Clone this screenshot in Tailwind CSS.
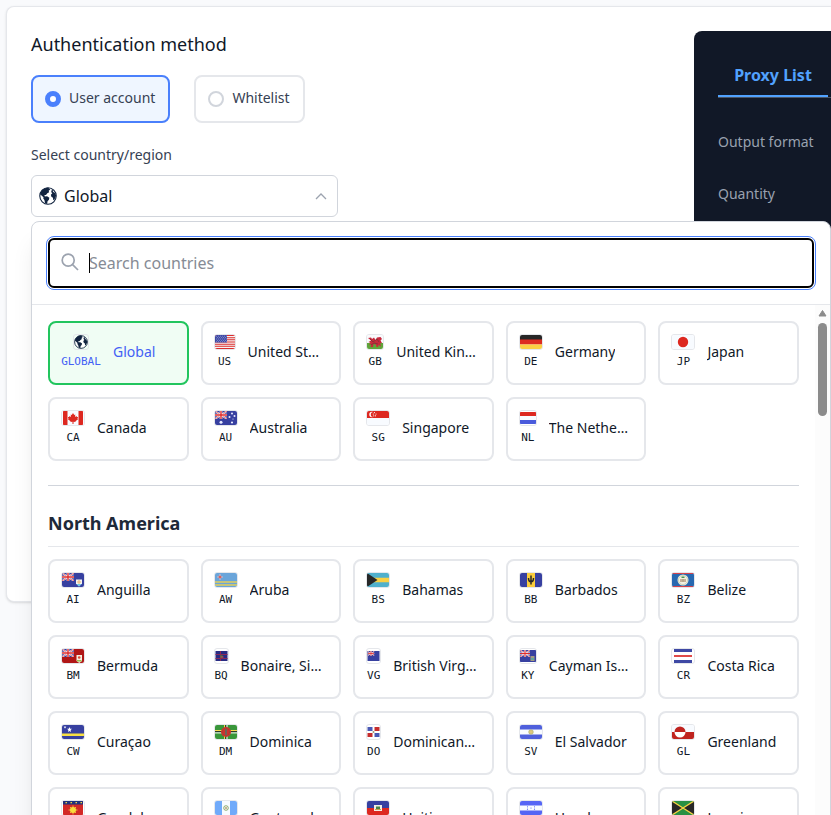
<!DOCTYPE html>
<html lang="en">
<head>
    <meta charset="UTF-8">
    <meta name="viewport" content="width=device-width, initial-scale=1.0">
    <title>Proxy Setup</title>
    <script src="https://cdn.jsdelivr.net/npm/@tailwindcss/browser@4"></script>
</head>
<body class="h-screen overflow-hidden bg-[#f9fafc] pt-1.5 pl-1.5 font-['Noto_Sans','Open_Sans',sans-serif] text-gray-900">
    <!-- Shared shapes -->
    <svg class="hidden">
        <symbol id="globe" viewBox="0 0 16 16">
            <circle cx="8" cy="8" r="7.3" fill="#fff" stroke="#11233f" stroke-width="1"/>
            <path fill="#11233f" d="M8.2.6 10 2.2 8.6 3.4 9 4.6 7.4 5.6 6.2 7 4.8 7.2 5.2 8.4 7.2 8.2 9.2 9.6 8.8 11.4 7.6 12.6 7.2 15 5.4 14.4 4.8 11.6 3.8 10.2 4 9 1 6.4C1.6 3 4.6.6 8.2.6ZM11.4 2.4 13 3.4 12.2 4.2 14 5.2 15.2 7.6 14.6 9.4 13.4 11.8 12.6 11.4 12.4 9.6 11 8.6 10.6 6.8 11.8 5.6 10.8 4.4Z"/>
        </symbol>
        <symbol id="jack" viewBox="0 0 12 8">
            <path fill="#3740a0" d="M0 0h12v8H0z"/>
            <path stroke="#fff" stroke-width="1.6" d="m0 0 12 8M12 0 0 8"/>
            <path stroke="#dd2c2c" stroke-width=".7" d="m0 0 12 8M12 0 0 8"/>
            <path stroke="#fff" stroke-width="2.6" d="M6 0v8M0 4h12"/>
            <path stroke="#dd2c2c" stroke-width="1.4" d="M6 0v8M0 4h12"/>
        </symbol>
    </svg>

    <main class="flex min-h-[596px] items-start rounded-l-lg border-y border-l border-gray-200 bg-white pt-6 pl-6 shadow-sm">
        <div class="min-w-0 flex-1">
            <h2 class="pb-0.5 text-lg leading-[26px]">Authentication method</h2>

            <div class="mt-4 flex gap-6">
                <label class="flex h-12 items-center gap-2 rounded-lg border-2 border-[#4a80fc] bg-blue-50 pr-[13px] pl-3 text-sm text-gray-700">
                    <input type="radio" name="auth" checked class="size-4 appearance-none rounded-full border-[5px] border-[#4a80fc] bg-white">
                    <span class="pb-0.5">User account</span>
                </label>
                <label class="flex h-12 items-center gap-2 rounded-lg border-2 border-gray-200 pr-[13px] pl-3 text-sm text-gray-700">
                    <input type="radio" name="auth" class="size-4 appearance-none rounded-full border-2 border-gray-300 bg-white">
                    <span class="pb-0.5">Whitelist</span>
                </label>
            </div>

            <label for="country" class="mt-5 mb-2 block text-sm leading-6 text-gray-700">Select country/region</label>
            <div class="relative w-[307px]">
                <select id="country" class="block h-[42px] w-full appearance-none rounded-md border border-gray-300 bg-white pl-8 text-base">
                    <option>Global</option>
                </select>
                <svg class="pointer-events-none absolute top-3 left-2 size-[18px]"><use href="#globe"/></svg>
                <svg class="pointer-events-none absolute top-4 right-[11px] size-3" viewBox="0 0 12 12" fill="none" stroke="#9ca3af" stroke-width="1.3"><path d="m1 8 5-5 5 5"/></svg>

                <!-- Country menu -->
                <div class="absolute top-full left-0 z-10 mt-1 w-[calc(100vw-31px)] rounded-t-lg border border-gray-300 bg-white shadow-xl">
                    <div class="border-b border-gray-200 p-3.5">
                        <div class="relative rounded-lg border border-[#4a80fc] p-px">
                            <svg class="pointer-events-none absolute top-4 left-3.5 size-[18px]" viewBox="0 0 18 18" fill="none" stroke="#9ca3af" stroke-width="1.7"><circle cx="7.2" cy="7.2" r="6"/><path d="m11.6 11.6 5.4 5.4"/></svg>
                            <span class="pointer-events-none absolute top-4 left-[42px] h-5 w-px bg-black"></span>
                            <input type="text" aria-label="Search countries" placeholder="Search countries" class="block h-[50px] w-full rounded-md border-2 border-black pl-[39px] text-base outline-none placeholder:text-[#868b95]">
                        </div>
                    </div>
                    <div class="flex">
                        <div class="min-w-0 flex-1 p-4">
                            <div id="popular" class="grid grid-cols-5 gap-3"></div>
                            <hr class="mt-6 border-gray-300">
                            <h3 class="mt-6 mb-3 border-b border-gray-200 pb-2.5 text-lg leading-[26px] font-bold text-gray-800">North America</h3>
                            <div id="northAmerica" class="grid grid-cols-5 gap-3"></div>
                        </div>
                        <!-- Scrollbar -->
                        <div class="flex w-[15px] flex-col items-center bg-[#fcfcfc] pt-1">
                            <svg class="h-2 w-[9px]" viewBox="0 0 9 8"><path fill="#8b8b8b" stroke="#8b8b8b" stroke-linejoin="round" d="M4.5 1.5 8 7H1z"/></svg>
                            <div class="mt-1.5 h-[93px] w-[9px] rounded-full bg-[#8b8b8b]"></div>
                        </div>
                    </div>
                </div>
            </div>
        </div>

        <!-- Output card -->
        <aside class="h-[540px] w-[137px] shrink-0 rounded-l-lg bg-[#111827] pt-6 pl-6">
            <div class="border-b border-gray-600">
                <button class="block h-[42px] w-[110px] border-b-2 border-blue-400 text-base font-bold text-blue-400">Proxy List</button>
            </div>
            <p class="mt-8 text-sm leading-6 whitespace-nowrap text-gray-400">Output format</p>
            <p class="mt-7 text-sm leading-6 text-gray-400">Quantity</p>
        </aside>
    </main>

    <script>
        const full = 'w-6', wide = 'w-[22px]', mid = 'w-[18px]', small = 'w-[15px]';

        // code, name, column width, viewBox, flag drawing
        const popular = [
            ['GLOBAL', 'Global', 'w-10', '0 0 16 16', '<use href="#globe" width="16" height="16"/>'],
            ['US', 'United States', wide, '0 0 20 14', '<path fill="#f4f4f4" d="M0 0h20v14H0z"/><path stroke="#dd2c2c" stroke-width="1.1" d="M0 .5h20M0 2.7h20M0 4.8h20M0 7h20M0 9.2h20M0 11.3h20M0 13.5h20"/><path fill="#3f4aa5" d="M0 0h12v7.6H0z"/><path stroke="#c9cdf0" stroke-width=".7" stroke-dasharray=".7 1.3" d="M1 1.2h11M2 2.6h10M1 4h11M2 5.4h10M1 6.7h11"/>'],
            ['GB', 'United Kingdom', mid, '0 0 16 14', '<path fill="#f8fafc" d="M0 0h16v8H0z"/><path fill="#5fa53a" d="M0 8h16v6H0z"/><path fill="#c8283c" d="m1 3 3-.5L5 4l2-1.500L8.500 5 10 2.500 13.500 2 15 4l-1.500 1.500L15 8l-2 .5 1 3-2.500-1.500-.5 2H9.500L9 9.500 6.500 9 6 12H3.500l1-2.500-2.500.5L3.500 8 1.500 7 4 5.500z"/><path stroke="#5b3a30" stroke-width=".6" fill="none" d="m3 4 3 3 4-3 2 3M4 10l3-2 4 1"/>'],
            ['DE', 'Germany', full, '0 0 22 14', '<path fill="#272727" d="M0 0h22v5H0z"/><path fill="#dd2c20" d="M0 4.6h22v5H0z"/><path fill="#fbd043" d="M0 9.4h22V14H0z"/>'],
            ['JP', 'Japan', full, '0 0 22 14', '<path fill="#f8fbff" d="M0 0h22v14H0z"/><circle cx="11" cy="7" r="5.2" fill="#dd2820"/>'],
            ['CA', 'Canada', full, '0 0 22 14', '<path fill="#f8fbff" d="M0 0h22v14H0z"/><path fill="#dd2820" d="M1 0h4.500v14H1zM16.500 0H21v14h-4.500z"/><path fill="#dd2820" d="m11 2 1.200 2 1.100-.5-.3 2.600 1.500-1.200.4 1h1.200l-.6 1.800.6.6-2.700 2 .2.800-2.100-.3V13h-1v-2.200l-2.100.3.2-.8-2.700-2 .6-.6-.6-1.800h1.200l.4-1L9 6.100l-.3-2.600 1.100.5z"/>'],
            ['AU', 'Australia', full, '0 0 22 14', '<path fill="#3740a0" d="M0 0h22v14H0z"/><use href="#jack" width="12" height="8"/><g fill="#e8eaff"><circle cx="6" cy="11.2" r="1.500"/><circle cx="17" cy="2.500" r="1"/><circle cx="14.500" cy="6" r="1"/><circle cx="19.500" cy="5" r="1"/><circle cx="18" cy="8" r=".6"/><circle cx="17" cy="11.500" r="1.100"/></g>'],
            ['SG', 'Singapore', full, '0 0 22 14', '<path fill="#f8fbff" d="M0 0h22v14H0z"/><path fill="#dd2820" d="M0 0h22v7H0z"/><circle cx="5" cy="3.500" r="2.700" fill="#fff"/><circle cx="6.300" cy="3.500" r="2.500" fill="#dd2820"/><g fill="#fff"><circle cx="7.500" cy="1.600" r=".6"/><circle cx="6.300" cy="3" r=".6"/><circle cx="9" cy="3" r=".6"/><circle cx="6.800" cy="4.800" r=".6"/><circle cx="8.500" cy="4.800" r=".6"/></g>'],
            ['NL', 'The Netherlands', mid, '0 0 16 14', '<path fill="#dd2820" d="M0 1h16v4H0z"/><path fill="#f8fbff" d="M0 5h16v4H0z"/><path fill="#4a5bdc" d="M0 9h16v4H0z"/>']
        ];

        const northAmerica = [
            ['AI', 'Anguilla', full, '0 0 22 14', '<path fill="#3740a0" d="M0 0h22v14H0z"/><use href="#jack" width="12" height="8"/><path fill="#f5f5f0" d="M14 6.500h6v4l-3 3-3-3z"/><path fill="#6cc7e8" d="M14.500 11h5L17 13.500z"/><circle cx="17" cy="9" r="1.200" fill="none" stroke="#e8a24c" stroke-width=".8"/>'],
            ['AW', 'Aruba', full, '0 0 22 14', '<path fill="#6aa5da" d="M0 0h22v14H0z"/><path stroke="#e5d05a" stroke-width="1.300" d="M0 9h22M0 12h22"/><path fill="#e0423c" stroke="#fff" stroke-width=".3" d="m5 1 .7 2.300L8 4l-2.300.7L5 7l-.7-2.300L2 4l2.300-.7z"/>'],
            ['BS', 'Bahamas', full, '0 0 22 14', '<path fill="#50b0cc" d="M0 0h22v14H0z"/><path fill="#fbd043" d="M0 4.700h22v4.600H0z"/><path fill="#272727" d="m0 0 10.500 7L0 14z"/>'],
            ['BB', 'Barbados', full, '0 0 22 14', '<path fill="#3740a0" d="M0 0h22v14H0z"/><path fill="#fbcd3c" d="M7 0h8v14H7z"/><path fill="none" stroke="#272727" stroke-width="1.500" d="M11 2.500v9M8.500 5q0 3.800 2.500 3.800T13.500 5"/>'],
            ['BZ', 'Belize', full, '0 0 22 14', '<path fill="#2868b0" d="M0 0h22v14H0z"/><path fill="#d5424a" d="M0 0h22v1H0zM0 13h22v1H0z"/><circle cx="11" cy="7" r="5.500" fill="#f3f0e0"/><circle cx="11" cy="7" r="4.600" fill="none" stroke="#a9bf98" stroke-width=".5"/><path fill="#9b7355" d="M8.500 6h1v3h-1zM12.500 6h1v3h-1z"/><path fill="#b5a98c" d="M10 6h2v3h-2z"/><path fill="#4c9554" d="M9.500 3.500h3V5h-3z"/>'],
            ['BM', 'Bermuda', full, '0 0 22 14', '<path fill="#b01616" d="M0 0h22v14H0z"/><use href="#jack" width="12" height="8"/><path fill="#f5f0e0" d="M14.500 6h5.500v6l-2.750 2-2.750-2z"/><circle cx="17.200" cy="8.500" r="1.300" fill="#df4b36"/><path fill="#9bbf4a" d="M15 11h4.500v1.500H15z"/>'],
            ['BQ', 'Bonaire, Sint Eustatius and Saba', small, '0 0 12 14', '<path fill="#292c83" d="M0 2h12v10H0z"/><path stroke="#8b2a56" d="M5 2v10M0 5.500h12M0 9.500h12"/><circle cx="6" cy="7.500" r="1.500" fill="#3b7748"/><path stroke="#d34a4a" d="M5 8h3"/>'],
            ['VG', 'British Virgin Islands', small, '0 0 12 14', '<path fill="#3740a0" d="M0 2h12v10H0z"/><use href="#jack" y="2" width="7" height="5"/>'],
            ['KY', 'Cayman Islands', mid, '0 0 16 14', '<path fill="#3740a0" d="M0 1h16v12H0z"/><use href="#jack" y="1" width="10" height="7"/><path fill="#a39a81" d="M10.500 7h4v5h-4z"/><path fill="#62a59a" d="M11 9h3v2h-3z"/>'],
            ['CR', 'Costa Rica', full, '0 0 22 14', '<path fill="#3e48a4" d="M2 0h18v3H2zM2 11h18v3H2z"/><path fill="#e04a48" d="M2 6h18v2H2z"/>'],
            ['CW', 'Curaçao', full, '0 0 22 14', '<path fill="#3740a0" d="M0 0h22v14H0z"/><path fill="#f7df43" d="M0 8.500h22v2.600H0z"/><path fill="#fff" d="m7.500 2 .7 1.700 1.800.1-1.400 1.200.5 1.900-1.600-1-1.600 1 .5-1.900L5 3.800l1.800-.1zM3 .8l.4.9.9.1-.7.6.2 1-.8-.6-.8.6.2-1-.7-.6.9-.1z"/>'],
            ['DM', 'Dominica', full, '0 0 22 14', '<path fill="#39963a" d="M0 0h22v14H0z"/><path stroke="#f4d94b" d="M0 5.500h22M9.500 0v14"/><path stroke="#272727" d="M0 6.700h22M10.800 0v14"/><path stroke="#fff" d="M0 7.900h22M12 0v14"/><circle cx="11" cy="7" r="5" fill="#cf3030"/><circle cx="11" cy="7" r="3.500" fill="none" stroke="#5d6c33" stroke-width=".6" stroke-dasharray="1 1"/><path stroke="#57705f" stroke-width="1.600" d="M11 4v6"/>'],
            ['DO', 'Dominican Republic', small, '0 0 12 14', '<path fill="#4a59b5" d="M0 2h5v4H0zM7 8h5v4H7z"/><path fill="#c62c2c" d="M7 2h5v4H7zM0 8h5v4H0z"/><circle cx="6" cy="7" r="1" fill="#9a9370"/>'],
            ['SV', 'El Salvador', full, '0 0 22 14', '<path fill="#f8fbff" d="M0 0h22v14H0z"/><path fill="#4f60dc" d="M0 0h22v4.500H0zM0 9.500h22V14H0z"/><circle cx="11" cy="7" r="2.300" fill="#ddc97d" stroke="#a4a86a" stroke-width=".6"/>'],
            ['GL', 'Greenland', full, '0 0 22 14', '<path fill="#f8fbff" d="M0 0h22v7H0z"/><path fill="#bf231f" d="M0 7h22v7H0z"/><path fill="#bf231f" d="M2.500 7a5.500 5.500 0 0 1 11 0z"/><path fill="#fff" d="M2.500 7a5.500 5.500 0 0 0 11 0z"/>'],
            ['GP', 'Guadeloupe', full, '0 0 20 14', '<path fill="#d32926" d="M0 0h20v14H0z"/><path fill="#20337d" d="M0 0h20v3.500H0z"/><path stroke="#f3d342" stroke-width="1.200" stroke-dasharray="1.500 3.500" d="M2.500 1.700h17"/><circle cx="10" cy="9" r="3" fill="#f9dc3c"/><path stroke="#f9dc3c" stroke-width=".8" d="M10 4.500v9M5.500 9h9M7 6l6 6M13 6l-6 6"/>'],
            ['GT', 'Guatemala', full, '0 0 22 14', '<path fill="#70aafa" d="M0 0h22v14H0z"/><path fill="#f8fbff" d="M7 0h8v14H7z"/><circle cx="11" cy="7" r="2.300" fill="none" stroke="#8cae72"/><path stroke="#b49864" stroke-width=".7" d="m9.500 8.500 3-3M9.500 5.500l3 3"/>'],
            ['HT', 'Haiti', full, '0 0 22 14', '<path fill="#3740a0" d="M0 0h22v7H0z"/><path fill="#dd2820" d="M0 7h22v7H0z"/><path fill="#f1efe4" d="M7 4h8v6H7z"/><path fill="#478346" d="M9 5.500h4V8H9z"/><path fill="#c89f4d" d="M8 8h6v1H8z"/>'],
            ['HN', 'Honduras', full, '0 0 22 14', '<path fill="#f8fbff" d="M0 0h22v14H0z"/><path fill="#5565f5" d="M0 0h22v4.500H0zM0 9.500h22V14H0z"/><g fill="#5565f5"><circle cx="7.500" cy="5.800" r=".6"/><circle cx="14.500" cy="5.800" r=".6"/><circle cx="11" cy="7" r=".6"/><circle cx="7.500" cy="8.200" r=".6"/><circle cx="14.500" cy="8.200" r=".6"/></g>'],
            ['JM', 'Jamaica', full, '0 0 22 14', '<path fill="#299044" d="M0 0h22v14H0z"/><path fill="#272727" d="m0 0 11 7L0 14zM22 0 11 7l11 7z"/><path stroke="#f4d243" stroke-width="1.300" d="m0 0 22 14M22 0 0 14"/>']
        ];

        function card([code, name, width, box, flag]) {
            const on = code === 'GLOBAL';
            return `<button class="flex h-16 min-w-0 items-center gap-3 rounded-lg border-2 pr-3.5 pl-[11px] text-left ${on ? 'border-[#22c55e] bg-green-50 text-[#4361f5]' : 'border-gray-200 bg-white'}">
                <span class="flex shrink-0 flex-col items-center gap-0.5 ${width}">
                    <svg class="h-4 rounded-[3px] border border-gray-200 ${on ? 'w-4' : 'w-full'}" viewBox="${box}">${flag}</svg>
                    <span class="font-['DejaVu_Sans_Mono',monospace] text-[11px] leading-5">${code}</span>
                </span>
                <span class="min-w-0 truncate pb-0.5 text-sm">${name}</span>
            </button>`;
        }

        document.getElementById('popular').innerHTML = popular.map(card).join('');
        document.getElementById('northAmerica').innerHTML = northAmerica.map(card).join('');
    </script>
</body>
</html>
